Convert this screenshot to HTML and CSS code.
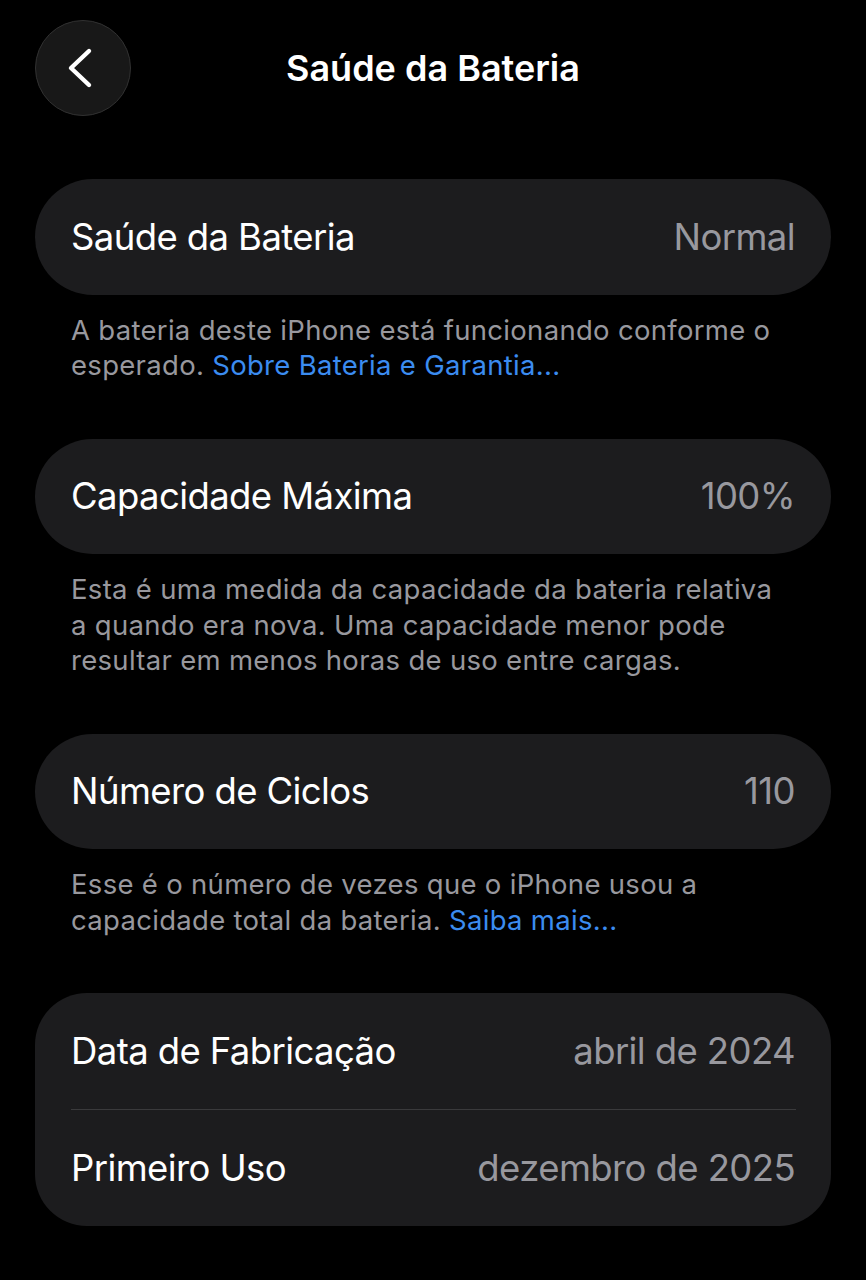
FILE: index.html
```html
<!DOCTYPE html>
<html lang="pt-BR">
<head>
<meta charset="utf-8">
<title>Saúde da Bateria</title>
<link rel="stylesheet" href="styles.css">
</head>
<body>
<div class="screen">
  <header class="nav">
    <button class="back" aria-label="Voltar">
      <svg width="30" height="42" viewBox="0 0 30 42"><path d="M23 4 L5 21 L23 38" fill="none" stroke="#ffffff" stroke-width="4.4" stroke-linecap="round" stroke-linejoin="round"/></svg>
    </button>
    <h1 class="title">Saúde da Bateria</h1>
  </header>

  <section class="group">
    <div class="card">
      <div class="row"><span class="label">Saúde da Bateria</span><span class="value">Normal</span></div>
    </div>
    <p class="note">A bateria deste iPhone está funcionando conforme o esperado. <a class="link">Sobre Bateria e Garantia...</a></p>
  </section>

  <section class="group">
    <div class="card">
      <div class="row"><span class="label">Capacidade Máxima</span><span class="value">100%</span></div>
    </div>
    <p class="note">Esta é uma medida da capacidade da bateria relativa a quando era nova. Uma capacidade menor pode resultar em menos horas de uso entre cargas.</p>
  </section>

  <section class="group">
    <div class="card">
      <div class="row"><span class="label">Número de Ciclos</span><span class="value">110</span></div>
    </div>
    <p class="note">Esse é o número de vezes que o iPhone usou a capacidade total da bateria. <a class="link">Saiba mais...</a></p>
  </section>

  <section class="group">
    <div class="card card-multi">
      <div class="row"><span class="label">Data de Fabricação</span><span class="value">abril de 2024</span></div>
      <div class="sep"></div>
      <div class="row"><span class="label">Primeiro Uso</span><span class="value">dezembro de 2025</span></div>
    </div>
  </section>
</div>
</body>
</html>
```

FILE: styles.css
```css
html, body {
  margin: 0;
  padding: 0;
  background: #000;
}
body {
  font-family: Inter, "Noto Sans", "Liberation Sans", sans-serif;
  color: #fff;
  width: 866px;
  height: 1280px;
  overflow: hidden;
}
.screen {
  padding: 20px 35px 0 35px;
}
.nav {
  position: relative;
  height: 96px;
  display: flex;
  align-items: center;
  justify-content: center;
  margin-bottom: 63px;
}
.back {
  position: absolute;
  left: 0;
  top: 0;
  width: 96px;
  height: 96px;
  border-radius: 50%;
  background: #181818;
  border: 1.5px solid #313131;
  display: flex;
  align-items: center;
  justify-content: center;
  padding: 0 4px 0 0;
  box-sizing: border-box;
}
.title {
  margin: 0;
  font-size: 36px;
  font-weight: 600;
  letter-spacing: 0;
}
.group {
  margin-bottom: 55px;
}
.card {
  background: #1c1c1e;
  border-radius: 58px;
}
.card-multi {
  border-radius: 52px;
}
.row {
  height: 115.5px;
  display: flex;
  align-items: center;
  justify-content: space-between;
  padding: 0 36px;
  font-size: 36.5px;
  letter-spacing: -0.6px;
}
.label {
  color: #fff;
}
.value {
  color: #98989e;
}
.sep {
  height: 1.5px;
  background: #3a3a3c;
  margin: 0 35px 0 36px;
}
.note {
  margin: 0;
  padding: 18px 51px 0 36px;
  font-size: 27.5px;
  line-height: 35.5px;
  color: #98989e;
  letter-spacing: 0.3px;
}
.link {
  color: #3b8cf0;
}
```
